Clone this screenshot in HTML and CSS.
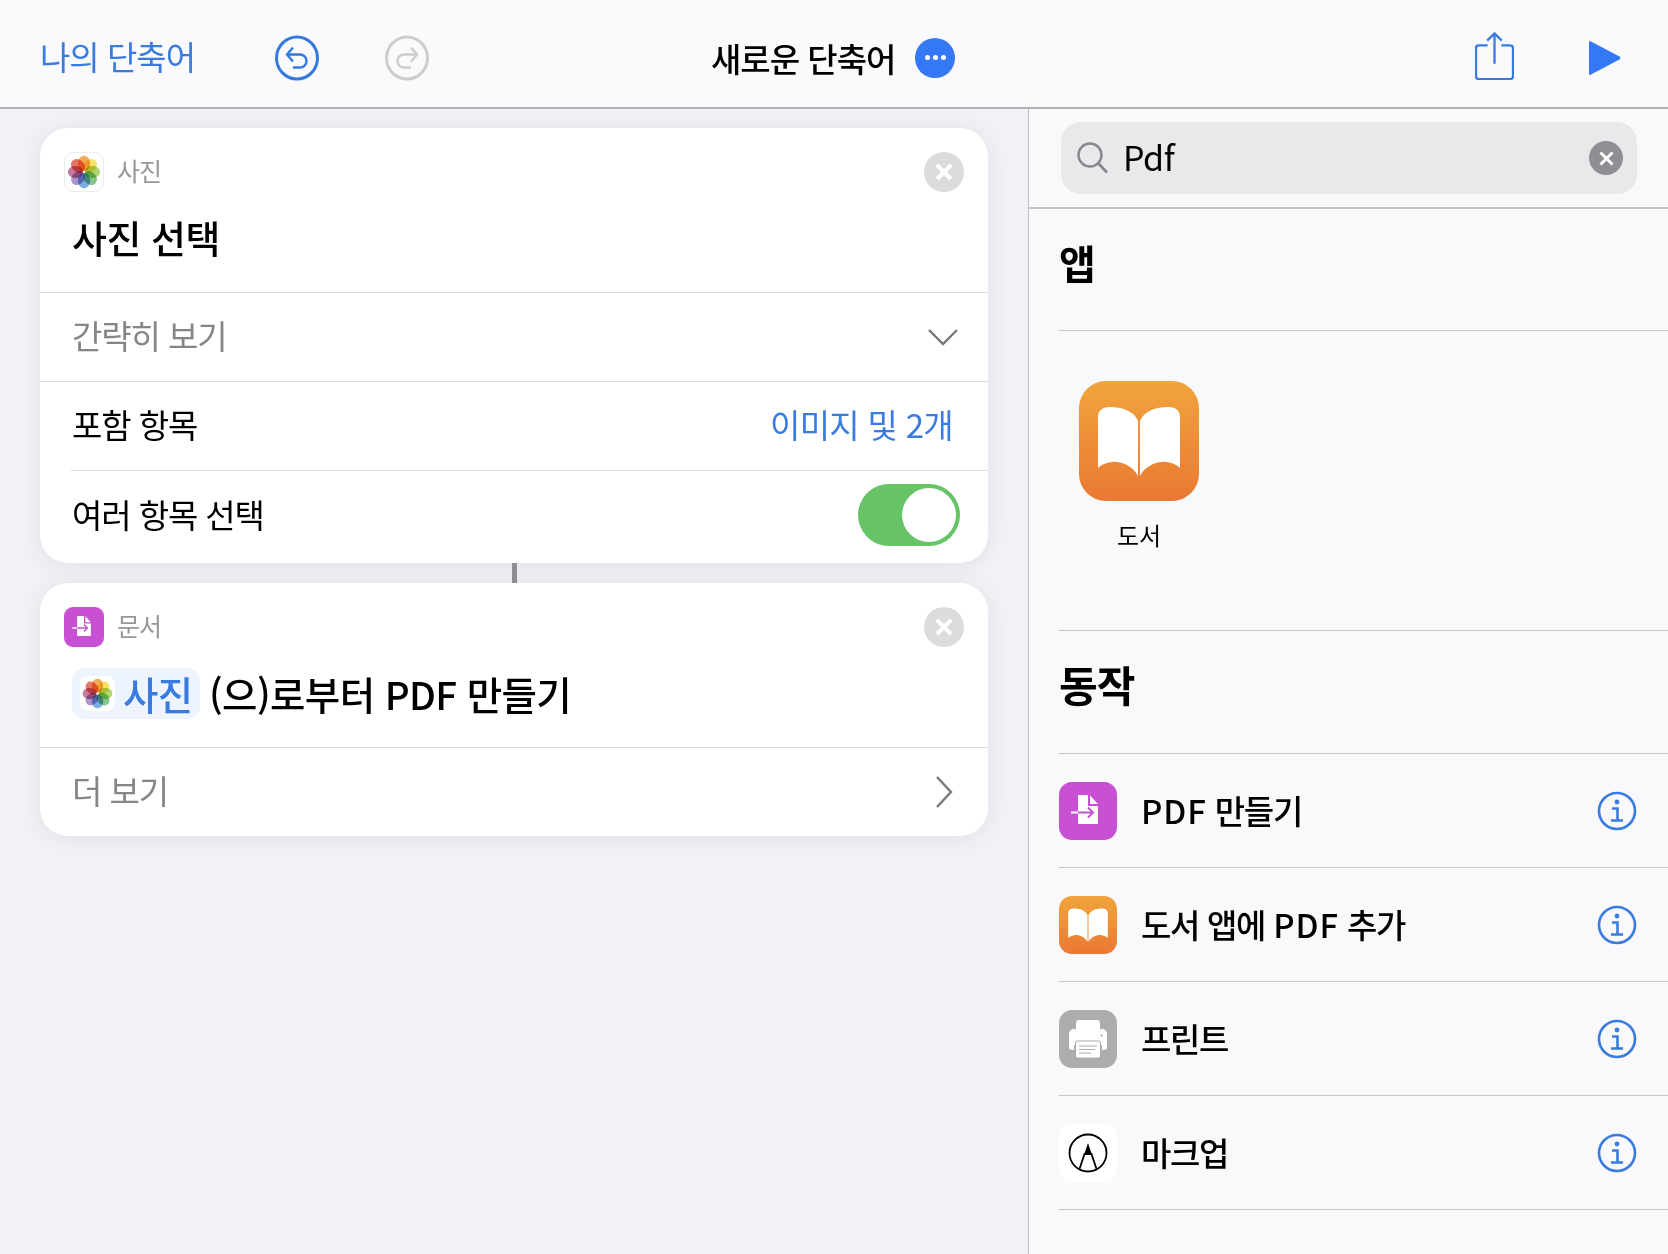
FILE: index.html
```html
<!DOCTYPE html>
<html lang="ko">
<head>
<meta charset="utf-8">
<title>새로운 단축어</title>
<link rel="stylesheet" href="styles.css">
</head>
<body>
<svg class="defs" width="0" height="0" aria-hidden="true">
  <defs>
    <linearGradient id="orange" x1="0" y1="0" x2="0" y2="1"><stop offset="0" stop-color="#f0a53d"/><stop offset="1" stop-color="#ea7833"/></linearGradient>
    <symbol id="flower" viewBox="0 0 40 40">
      <g class="petals">
        <ellipse class="petal" cx="20" cy="11" rx="6.500" ry="8" fill="#f0a040"/>
        <ellipse class="petal" cx="20" cy="11" rx="6.500" ry="8" fill="#f6e050" transform="rotate(45 20 20)"/>
        <ellipse class="petal" cx="20" cy="11" rx="6.500" ry="8" fill="#a6d060" transform="rotate(90 20 20)"/>
        <ellipse class="petal" cx="20" cy="11" rx="6.500" ry="8" fill="#70bc7c" transform="rotate(135 20 20)"/>
        <ellipse class="petal" cx="20" cy="11" rx="6.500" ry="8" fill="#6aa2dc" transform="rotate(180 20 20)"/>
        <ellipse class="petal" cx="20" cy="11" rx="6.500" ry="8" fill="#a088c4" transform="rotate(225 20 20)"/>
        <ellipse class="petal" cx="20" cy="11" rx="6.500" ry="8" fill="#c06a90" transform="rotate(270 20 20)"/>
        <ellipse class="petal" cx="20" cy="11" rx="6.500" ry="8" fill="#e66450" transform="rotate(315 20 20)"/>
      </g>
      <circle cx="20" cy="20" r="1.100" fill="#fff"/>
    </symbol>
    <symbol id="doc" viewBox="0 0 58 58">
      <rect width="58" height="58" rx="13" fill="#c850d2"/>
      <path d="M19 13h10v11h10v18H19z" fill="#fff"/>
      <path d="M31 13.500l8 8.500h-8z" fill="#fff"/>
      <path d="M12 30.500h8" stroke="#fff" stroke-width="2" fill="none"/>
      <path d="M19 30.500h15M29 25.500l5 5-5 5" stroke="#c850d2" stroke-width="2" fill="none"/>
    </symbol>
    <symbol id="book" viewBox="0 0 120 120">
      <path d="M59 95C54 85 42 80 33 81C27 81.500 22 84 19 87V36C19 29 24 26 31 26C43 26 55 30 59 40Z" fill="#fff"/>
      <path d="M61 95C66 85 78 80 87 81C93 81.500 98 84 101 87V36C101 29 96 26 89 26C77 26 65 30 61 40Z" fill="#fff"/>
    </symbol>
    <symbol id="info" viewBox="0 0 40 40">
      <circle cx="20" cy="20" r="18" fill="none" stroke="#3a7be0" stroke-width="2.600"/>
      <circle cx="20" cy="11" r="2.400" fill="#3a7be0"/>
      <path d="M15 17.500h5.500V29M14 29.500h12" fill="none" stroke="#3a7be0" stroke-width="2.600"/>
    </symbol>
  </defs>
</svg>

<header class="topbar">
  <div class="bar-left">
    <a class="back">나의 단축어</a>
    <svg class="round undo" viewBox="0 0 44 46"><ellipse cx="22" cy="23" rx="20.500" ry="21" fill="none" stroke="currentColor" stroke-width="3"/><path d="M18 12.500l-6 7 6 7M12 19.500h13a6.500 6.500 0 0 1 0 13h-7" fill="none" stroke="currentColor" stroke-width="2.400"/></svg>
    <svg class="round redo" viewBox="0 0 44 46"><ellipse cx="22" cy="23" rx="20.500" ry="21" fill="none" stroke="currentColor" stroke-width="3"/><path d="M26 12.500l6 7-6 7M32 19.500h-13a6.500 6.500 0 0 0 0 13h7" fill="none" stroke="currentColor" stroke-width="2.400"/></svg>
  </div>
  <div class="bar-center">
    <h1 class="doc-title">새로운 단축어</h1>
    <span class="more"><i></i><i></i><i></i></span>
  </div>
  <div class="bar-right">
    <svg class="share" viewBox="0 0 40 50" preserveAspectRatio="none"><path d="M13 14H4a3 3 0 0 0-3 3v29a3 3 0 0 0 3 3h32a3 3 0 0 0 3-3V17a3 3 0 0 0-3-3h-9" fill="none" stroke="#3a7be0" stroke-width="2.400"/><path d="M20 33V2M12.500 9L20 1.500 27.500 9" fill="none" stroke="#3a7be0" stroke-width="2.400"/></svg>
    <svg class="play" viewBox="0 0 34 36"><path d="M2 2.500c0-1.500 1-2 2-1L32.500 16.500c1.200 1 1.200 2 0 3L4 34.500c-1 1-2 .5-2-1z" fill="#3478f6"/></svg>
  </div>
</header>

<div class="workspace">
  <main class="editor">
    <section class="card card-photos">
      <div class="card-top">
        <div class="card-head">
          <svg class="tile tile-photos"><use href="#flower"/></svg>
          <span class="cat">사진</span>
          <span class="close"></span>
        </div>
        <div class="action-title">사진 선택</div>
      </div>
      <div class="row muted-row"><span>간략히 보기</span>
        <svg class="chev-down" viewBox="0 0 32 18"><path d="M2 2l14 14L30 2" fill="none" stroke="#77777c" stroke-width="2.400"/></svg>
      </div>
      <div class="row"><span>포함 항목</span><span class="value">이미지 및 2개</span></div>
      <div class="row row-inset row-last"><span>여러 항목 선택</span><span class="toggle"><i></i></span></div>
    </section>
    <div class="connector"></div>
    <section class="card card-pdf">
      <div class="card-top">
        <div class="card-head">
          <svg class="tile"><use href="#doc"/></svg>
          <span class="cat">문서</span>
          <span class="close"></span>
        </div>
        <div class="sentence">
          <span class="chip"><svg class="chip-icon"><use href="#flower"/></svg>사진</span>
          <span>(으)로부터 PDF 만들기</span>
        </div>
      </div>
      <div class="row muted-row row-more"><span>더 보기</span>
        <svg class="chev-right" viewBox="0 0 18 34"><path d="M2 2l14 15L2 32" fill="none" stroke="#77777c" stroke-width="2.400"/></svg>
      </div>
    </section>
  </main>

  <aside class="library">
    <div class="searchwrap">
      <div class="search">
        <svg class="mag" viewBox="0 0 32 32"><circle cx="13" cy="13" r="11.500" fill="none" stroke="#88888d" stroke-width="2.400"/><path d="M21.500 21.500L30 30.500" stroke="#88888d" stroke-width="2.800" fill="none"/></svg>
        <span class="query">Pdf</span>
        <span class="clear"></span>
      </div>
    </div>
    <h2 class="sec sec-apps">앱</h2>
    <div class="apps">
      <div class="app">
        <svg class="app-icon" viewBox="0 0 120 120"><rect width="120" height="120" rx="27" fill="url(#orange)"/><use href="#book" width="120" height="120"/></svg>
        <span class="app-name">도서</span>
      </div>
    </div>
    <h2 class="sec sec-actions">동작</h2>
    <ul class="actions">
      <li class="act"><svg class="act-icon"><use href="#doc"/></svg><span class="act-name"><b class="latin">PDF</b> 만들기</span><svg class="info"><use href="#info"/></svg></li>
      <li class="act"><svg class="act-icon" viewBox="0 0 58 58"><rect width="58" height="58" rx="13" fill="url(#orange)"/><use href="#book" width="58" height="58"/></svg><span class="act-name">도서 앱에 <b class="latin">PDF</b> 추가</span><svg class="info"><use href="#info"/></svg></li>
      <li class="act"><svg class="act-icon" viewBox="0 0 58 58"><rect width="58" height="58" rx="13" fill="#adadad"/><path d="M17 22V13a3 3 0 0 1 3-3h18a3 3 0 0 1 3 3v9z" fill="#fff"/><path d="M15 19h28a5 5 0 0 1 5 5v13a3 3 0 0 1-3 3h-2V35H15v5h-2a3 3 0 0 1-3-3V24a5 5 0 0 1 5-5z" fill="#fff"/><circle cx="42.500" cy="25.500" r="1" fill="#999"/><rect x="16.500" y="31" width="25" height="17" rx="2" fill="#fff" stroke="#adadad" stroke-width="1.200"/><path d="M20 36h18M20 39.500h16M20 43h12" stroke="#adadad" stroke-width="1.200"/></svg><span class="act-name">프린트</span><svg class="info"><use href="#info"/></svg></li>
      <li class="act"><svg class="act-icon" viewBox="0 0 58 58"><rect width="58" height="58" rx="13" fill="#fff"/><circle cx="29" cy="29" r="18.500" fill="none" stroke="#000" stroke-width="1.800"/><path d="M20.500 45l5-15h7l5 15" fill="none" stroke="#000" stroke-width="1.800"/><path d="M29 19l-4 12h8z" fill="#000"/></svg><span class="act-name">마크업</span><svg class="info"><use href="#info"/></svg></li>
    </ul>
  </aside>
</div>
</body>
</html>
```

FILE: styles.css
```css
* { box-sizing: border-box; }
html, body { margin: 0; height: 100%; }
body {
  width: 1668px;
  height: 1254px;
  overflow: hidden;
  display: flex;
  flex-direction: column;
  background: #f1f1f6;
  font-family: "Noto Sans CJK KR", "Noto Sans", sans-serif;
  color: #000;
}
.defs { position: absolute; }

/* top bar */
.topbar {
  flex: 0 0 109px;
  display: flex;
  align-items: center;
  background: #fafafc;
  border-bottom: 2px solid #b2b2b5;
  padding: 8px 0 0 40px;
}
.bar-left { display: flex; align-items: center; width: 671px; color: #3a7be0; }
.back { width: 235px; font-size: 33px; color: #3a7be0; letter-spacing: -1px; margin-bottom: 3px; }
.round { width: 44px; height: 46px; display: block; }
.undo { color: #3478e0; margin-right: 66px; }
.redo { color: #cdcdcd; }
.bar-center { display: flex; align-items: center; width: 244px; }
.doc-title { margin: 0; font-size: 33px; font-weight: 500; width: 204px; letter-spacing: -1px; white-space: nowrap; }
.more {
  width: 40px; height: 40px; border-radius: 50%;
  background: #3478f6;
  display: flex; align-items: center; justify-content: center; gap: 3px;
}
.more i { width: 5px; height: 5px; border-radius: 50%; background: #fff; }
.bar-right { display: flex; align-items: center; margin-left: 520px; }
.share { width: 39px; height: 48px; margin-top: -3px; }
.play { width: 34px; height: 36px; margin-left: 73px; }

/* workspace */
.workspace { flex: 1; display: flex; min-height: 0; }
.editor {
  width: 1028px;
  padding: 19px 40px 0;
  display: flex;
  flex-direction: column;
}
.card {
  width: 948px;
  background: #fff;
  border-radius: 28px;
  box-shadow: 0 2px 22px rgba(60, 60, 100, .09);
}
.card-top { height: 164px; padding: 24px 24px 0; }
.card-head { display: flex; align-items: center; height: 40px; }
.tile { width: 40px; height: 40px; flex: none; }
.tile-photos { background: #fff; border: 1px solid #ececec; border-radius: 9px; }
.petals { isolation: isolate; }
.petal { mix-blend-mode: multiply; opacity: .88; }
.cat { font-size: 25px; color: #98989c; margin: 0 0 4px 13px; letter-spacing: -1px; }
.close {
  margin-left: auto;
  width: 40px; height: 40px; border-radius: 50%;
  background: #dcdcde;
  position: relative;
}
.close::before, .close::after, .clear::before, .clear::after {
  content: "";
  position: absolute;
  left: 50%; top: 50%;
  width: 20px; height: 3.500px;
  margin: -1.750px 0 0 -10px;
  background: #fff;
  transform: rotate(45deg);
}
.close::after, .clear::after { transform: rotate(-45deg); }
.action-title {
  margin: 18px 0 0 8px;
  font-size: 38px;
  line-height: 54px;
  font-weight: 500;
  letter-spacing: -.5px;
}
.row {
  height: 89px;
  display: flex;
  align-items: center;
  justify-content: space-between;
  padding: 0 35px 4px 32px;
  border-top: 1px solid #dcdcde;
  font-size: 33px;
  letter-spacing: -1.1px;
}
.muted-row { color: #85858a; }
.value { color: #3a7be0; letter-spacing: -.7px; }
.row-inset { position: relative; border-top: 0; }
.row-inset::before {
  content: ""; position: absolute; top: 0; left: 31px; right: 0;
  height: 1px; background: #dcdcde;
}
.row-last { height: 93px; padding-right: 28px; padding-bottom: 5px; }
.chev-down { width: 32px; height: 18px; margin: 4px -6px 0 0; }
.chev-right { width: 18px; height: 34px; margin: 4px 0 0 0; }
.toggle {
  width: 102px; height: 62px; border-radius: 31px;
  background: #66c466;
  position: relative;
  margin-top: 2px;
}
.toggle i {
  position: absolute; right: 4px; top: 4px;
  width: 54px; height: 54px; border-radius: 50%;
  background: #fff;
}
.connector { width: 5px; height: 20px; background: #8e8e93; margin-left: 472px; }
.sentence {
  display: flex; align-items: center;
  margin: 18px 0 0 8px;
  font-size: 38.500px;
  font-weight: 500;
  letter-spacing: -.6px;
  gap: 9px;
  white-space: nowrap;
}
.chip {
  height: 51px; width: 128px;
  display: flex; align-items: center;
  padding-left: 8px;
  border-radius: 13px;
  background: #eef4fd;
  color: #3a7be0;
}
.chip-icon { width: 35px; height: 35px; flex: none; background: #fff; border-radius: 8px; margin-right: 8px; }
.row-more { height: 89px; }

/* library */
.library {
  width: 640px;
  background: #f9f9fb;
  border-left: 1px solid #c0c0c3;
}
.searchwrap { height: 100px; padding: 13px 31px 0 32px; border-bottom: 2px solid #c4c4c6; }
.search {
  height: 72px;
  border-radius: 20px;
  background: #e9e9eb;
  display: flex; align-items: center;
  padding: 0 14px 0 16px;
}
.mag { width: 32px; height: 32px; }
.query { font-size: 34px; margin: 0 0 4px 14px; letter-spacing: -.5px; }
.clear {
  margin-left: auto;
  width: 34px; height: 34px; border-radius: 50%;
  background: #8e8e93;
  position: relative;
}
.clear::before, .clear::after { width: 17px; height: 3px; margin: -1.500px 0 0 -8.500px; }
.sec {
  margin: 0 0 0 30px;
  font-weight: 700;
  border-bottom: 1px solid #c8c8ca;
  display: flex; align-items: center;
}
.sec-apps { height: 122px; font-size: 40px; padding-bottom: 15px; }
.sec-actions { height: 123px; font-size: 42px; letter-spacing: -1px; padding-bottom: 17px; }
.apps { height: 300px; margin-left: 30px; border-bottom: 1px solid #c8c8ca; padding: 50px 0 0 20px; }
.app { width: 120px; display: flex; flex-direction: column; align-items: center; }
.app-icon { width: 120px; height: 120px; }
.app-name { font-size: 24px; margin-top: 16px; letter-spacing: -.2px; line-height: 36px; }
.actions { list-style: none; margin: 0 0 0 30px; padding: 0; }
.act {
  height: 114px;
  display: flex; align-items: center;
  border-bottom: 1px solid #c8c8ca;
}
.act-icon { width: 58px; height: 58px; flex: none; }
.act-name { margin: 0 0 2px 24px; font-size: 33px; font-weight: 500; letter-spacing: -1.3px; white-space: pre; }
.latin { font-weight: 500; letter-spacing: .9px; }
.info { width: 40px; height: 40px; margin-left: auto; margin-right: 31px; }
```
